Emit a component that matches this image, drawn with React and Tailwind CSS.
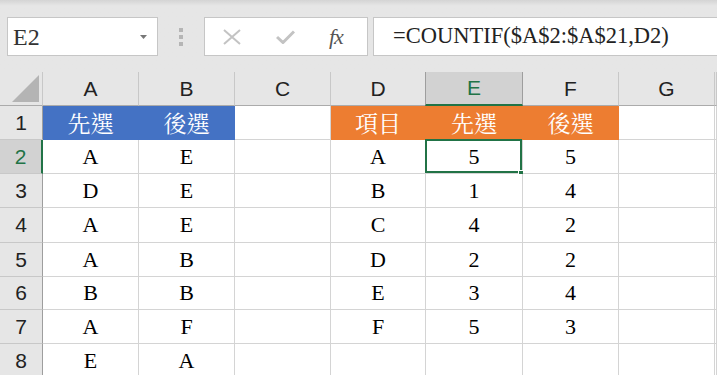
import React from 'react';

const serif = "font-['Liberation_Serif','Noto_Serif_CJK_TC','Noto_Sans_CJK_TC',serif]";
const cjk = "font-['Noto_Serif_CJK_TC','Noto_Sans_CJK_TC',sans-serif]";
const sans = "font-['Liberation_Sans',Arial,sans-serif]";

const columns = ['A', 'B', 'C', 'D', 'E', 'F', 'G', ''];

const rows = [
  ['先選', '後選', '', '項目', '先選', '後選', '', ''],
  ['A', 'E', '', 'A', '5', '5', '', ''],
  ['D', 'E', '', 'B', '1', '4', '', ''],
  ['A', 'E', '', 'C', '4', '2', '', ''],
  ['A', 'B', '', 'D', '2', '2', '', ''],
  ['B', 'B', '', 'E', '3', '4', '', ''],
  ['A', 'F', '', 'F', '5', '3', '', ''],
  ['E', 'A', '', '', '', '', '', ''],
];

const FormulaBar = () => (
  <div className="h-[72px] flex items-start pt-[17px] bg-gradient-to-b from-[#d4d4d4] via-[#e6e6e6] via-[8%] to-[#e6e6e6]">
    <div className="ml-[7px] w-[151px] h-[39px] bg-white border border-[#c6c6c6] flex items-center justify-between pl-[5px] pr-[10px]">
      <span className={`${serif} text-[24px] text-[#333] leading-none`}>E2</span>
      <svg width="7" height="4" viewBox="0 0 7 4">
        <path d="M0 0 L7 0 L3.5 4 Z" fill="#777" />
      </svg>
    </div>
    <div className="w-[46px] h-[39px] flex flex-col items-center justify-center gap-[3px]">
      <div className="w-[4px] h-[4px] bg-[#b5b5b5]" />
      <div className="w-[4px] h-[4px] bg-[#b5b5b5]" />
      <div className="w-[4px] h-[4px] bg-[#b5b5b5]" />
    </div>
    <div className="w-[164px] h-[39px] bg-white border border-[#c6c6c6] flex items-center">
      <svg className="ml-[18px]" width="18" height="16" viewBox="0 0 18 16">
        <path d="M1 1 L17 15 M17 1 L1 15" stroke="#c3c3c3" strokeWidth="2" fill="none" />
      </svg>
      <svg className="ml-[35px]" width="19" height="14" viewBox="0 0 19 14">
        <path d="M1 7 L7 12.5 L18 1.5" stroke="#c3c3c3" strokeWidth="3" fill="none" />
      </svg>
      <span className={`${serif} ml-[34px] text-[22px] italic text-[#555] leading-none tracking-[-1px]`}>fx</span>
    </div>
    <div className="ml-[5px] flex-1 h-[39px] bg-white border border-[#c6c6c6] border-r-0 flex items-center pl-[19px]">
      <span className={`${serif} text-[22.5px] text-[#222] leading-none`}>=COUNTIF($A$2:$A$21,D2)</span>
    </div>
  </div>
);

const cellStyle = (r, c) => {
  if (r === 0 && (c === 0 || c === 1)) return 'bg-[#4472c4] border-[#4472c4] text-white';
  if (r === 0 && c >= 3 && c <= 5) return 'bg-[#ed7d31] border-[#ed7d31] text-white';
  return 'bg-white border-[#d4d4d4] text-black';
};

export default function App() {
  return (
    <div className="w-[717px] h-[375px] overflow-hidden bg-[#e6e6e6]">
      <FormulaBar />
      <div className="grid grid-cols-[43px_96px_96px_96px_95px_97px_96px_96px_1fr] grid-rows-[34px_34px_34px_34px_35px_34px_33px_34px_34px]">
        <div className="relative bg-[#e6e6e6] border-r border-b border-r-[#c8c8c8] border-b-[#ababab]">
          <svg className="absolute right-[3px] bottom-[3px]" width="27" height="27" viewBox="0 0 27 27">
            <path d="M27 0 L27 27 L0 27 Z" fill="#b4b4b4" />
          </svg>
        </div>
        {columns.map((col) =>
          col === 'E' ? (
            <div key="E" className={`${sans} relative -ml-px bg-[#d2d2d2] border-l border-r border-[#9e9e9e] border-b-2 border-b-[#217346] flex items-center justify-center text-[21px] text-[#217346]`}>
              E
            </div>
          ) : (
            <div key={col || 'end'} className={`${sans} bg-[#e6e6e6] border-r border-b border-r-[#c8c8c8] border-b-[#ababab] flex items-center justify-center text-[21px] text-[#222]`}>
              {col}
            </div>
          )
        )}
        {rows.map((row, r) => (
          <React.Fragment key={r}>
            {r === 1 ? (
              <div className={`${sans} bg-[#d2d2d2] border-r-2 border-r-[#217346] border-b border-b-[#c8c8c8] flex items-center justify-center text-[21px] text-[#217346]`}>
                {r + 1}
              </div>
            ) : (
              <div className={`${sans} bg-[#e6e6e6] border-r border-b border-r-[#9e9e9e] border-b-[#c8c8c8] flex items-center justify-center text-[21px] text-[#222]`}>
                {r + 1}
              </div>
            )}
            {row.map((val, c) => (
              <div
                key={c}
                className={`relative border-r border-b flex items-center justify-center leading-none ${cellStyle(r, c)} ${r === 0 ? `${cjk} text-[23px]` : `${serif} text-[22px]`}`}
              >
                {val}
                {r === 1 && c === 4 && (
                  <>
                    <div className="absolute -left-px -top-px right-0 bottom-0 border-2 border-[#217346]" />
                    <div className="absolute -right-[3px] -bottom-[4px] w-[7px] h-[7px] bg-[#217346] border border-white" />
                  </>
                )}
              </div>
            ))}
          </React.Fragment>
        ))}
      </div>
    </div>
  );
}
